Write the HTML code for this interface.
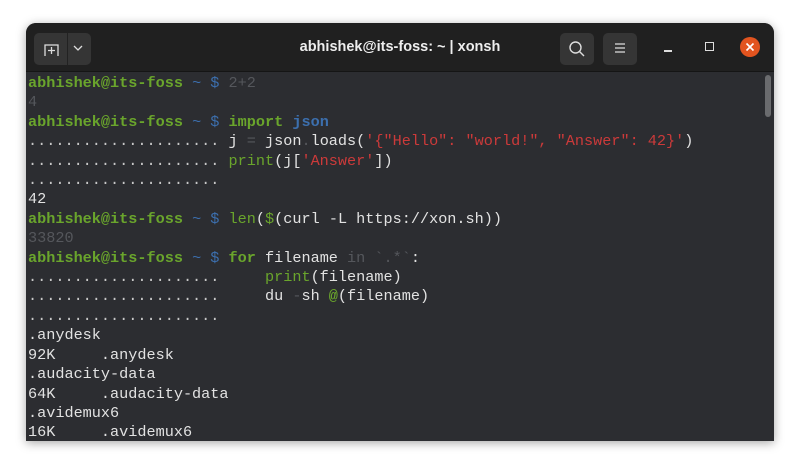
<!DOCTYPE html>
<html><head><style>
html,body{margin:0;padding:0;width:800px;height:470px;background:#fff;overflow:hidden}
.win{position:absolute;left:26px;top:23px;width:748px;height:418px;background:#2c2d31;border-radius:10px 10px 0 0;overflow:hidden;box-shadow:0 2px 10px rgba(0,0,0,.35)}
.tb{position:absolute;left:0;top:0;width:748px;height:48px;background:#202020;border-bottom:1px solid #151515}
.btn{position:absolute;top:10px;height:32px;background:#353535;border-radius:5px}
.title{position:absolute;left:0;right:0;top:16px;text-align:center;color:#eee;font:bold 14.5px "Liberation Sans",sans-serif}
.term{position:absolute;left:2px;top:51px;font:15.2px/19.4px "Liberation Mono",monospace;color:#e2e2e2;white-space:pre}
.g{color:#6aa52c;font-weight:bold}.gn{color:#6aa52c}.b{color:#3c6fae}.bb{color:#3c6fae;font-weight:bold}.d{color:#55575c}.r{color:#cc3a3a}.dot{color:#c8c8c8}
.sb{position:absolute;right:3px;top:52px;width:6px;height:42px;background:#6a6b6e;border-radius:3px}
</style></head><body>
<div class="win">
<div class="tb">
<div class="btn" style="left:8px;width:57px"></div>
<div style="position:absolute;left:41px;top:10px;width:1px;height:32px;background:#222"></div>
<svg style="position:absolute;left:16px;top:16px" width="20" height="20" viewBox="0 0 20 20"><path d="M3 17V6h13v11M9.5 8v7M6 11.5h7" stroke="#ddd" stroke-width="1.3" fill="none"/></svg>
<svg style="position:absolute;left:46px;top:20px" width="12" height="10" viewBox="0 0 12 10"><path d="M2 3l4 4 4-4" stroke="#ddd" stroke-width="1.3" fill="none"/></svg>
<div class="title">abhishek@its-foss: ~ | xonsh</div>
<div class="btn" style="left:534px;width:34px"></div>
<svg style="position:absolute;left:542px;top:17px" width="18" height="18" viewBox="0 0 18 18"><circle cx="7.5" cy="7.5" r="5.5" stroke="#ddd" stroke-width="1.4" fill="none"/><path d="M11.5 11.5l4.5 4.5" stroke="#ddd" stroke-width="1.4"/></svg>
<div class="btn" style="left:577px;width:34px"></div>
<svg style="position:absolute;left:587px;top:18px" width="14" height="14" viewBox="0 0 14 14"><path d="M2 3h10M2 7h10M2 11h10" stroke="#ddd" stroke-width="1.3"/></svg>
<div style="position:absolute;left:638px;top:27px;width:8px;height:1.5px;background:#ddd"></div>
<div style="position:absolute;left:679px;top:19px;width:7px;height:7px;border:1.3px solid #ddd"></div>
<div style="position:absolute;left:714px;top:14px;width:20px;height:20px;border-radius:50%;background:#e2541f"></div>
<svg style="position:absolute;left:718px;top:18px" width="12" height="12" viewBox="0 0 12 12"><path d="M2.5 2.5l7 7M9.5 2.5l-7 7" stroke="#fff" stroke-width="1.6"/></svg>
</div>
<div class="sb"></div>
<div class="term"><span class="g">abhishek@its-foss</span> <span class="b">~ $</span> <span class="d">2+2</span>
<span class="d">4</span>
<span class="g">abhishek@its-foss</span> <span class="b">~ $</span> <span class="g">import</span> <span class="bb">json</span>
<span class="dot">.....................</span> j <span class="d">=</span> json<span class="d">.</span>loads(<span class="r">'{"Hello": "world!", "Answer": 42}'</span>)
<span class="dot">.....................</span> <span class="gn">print</span>(j[<span class="r">'Answer'</span>])
<span class="dot">.....................</span>
42
<span class="g">abhishek@its-foss</span> <span class="b">~ $</span> <span class="gn">len</span>(<span class="gn">$</span>(curl -L https://xon.sh))
<span class="d">33820</span>
<span class="g">abhishek@its-foss</span> <span class="b">~ $</span> <span class="g">for</span> filename <span class="d">in</span> <span class="d">`.*`</span>:
<span class="dot">.....................</span>     <span class="gn">print</span>(filename)
<span class="dot">.....................</span>     du <span class="d">-</span>sh <span class="g">@</span>(filename)
<span class="dot">.....................</span>
.anydesk
92K     .anydesk
.audacity-data
64K     .audacity-data
.avidemux6
16K     .avidemux6</div>
</div>
</body></html>
